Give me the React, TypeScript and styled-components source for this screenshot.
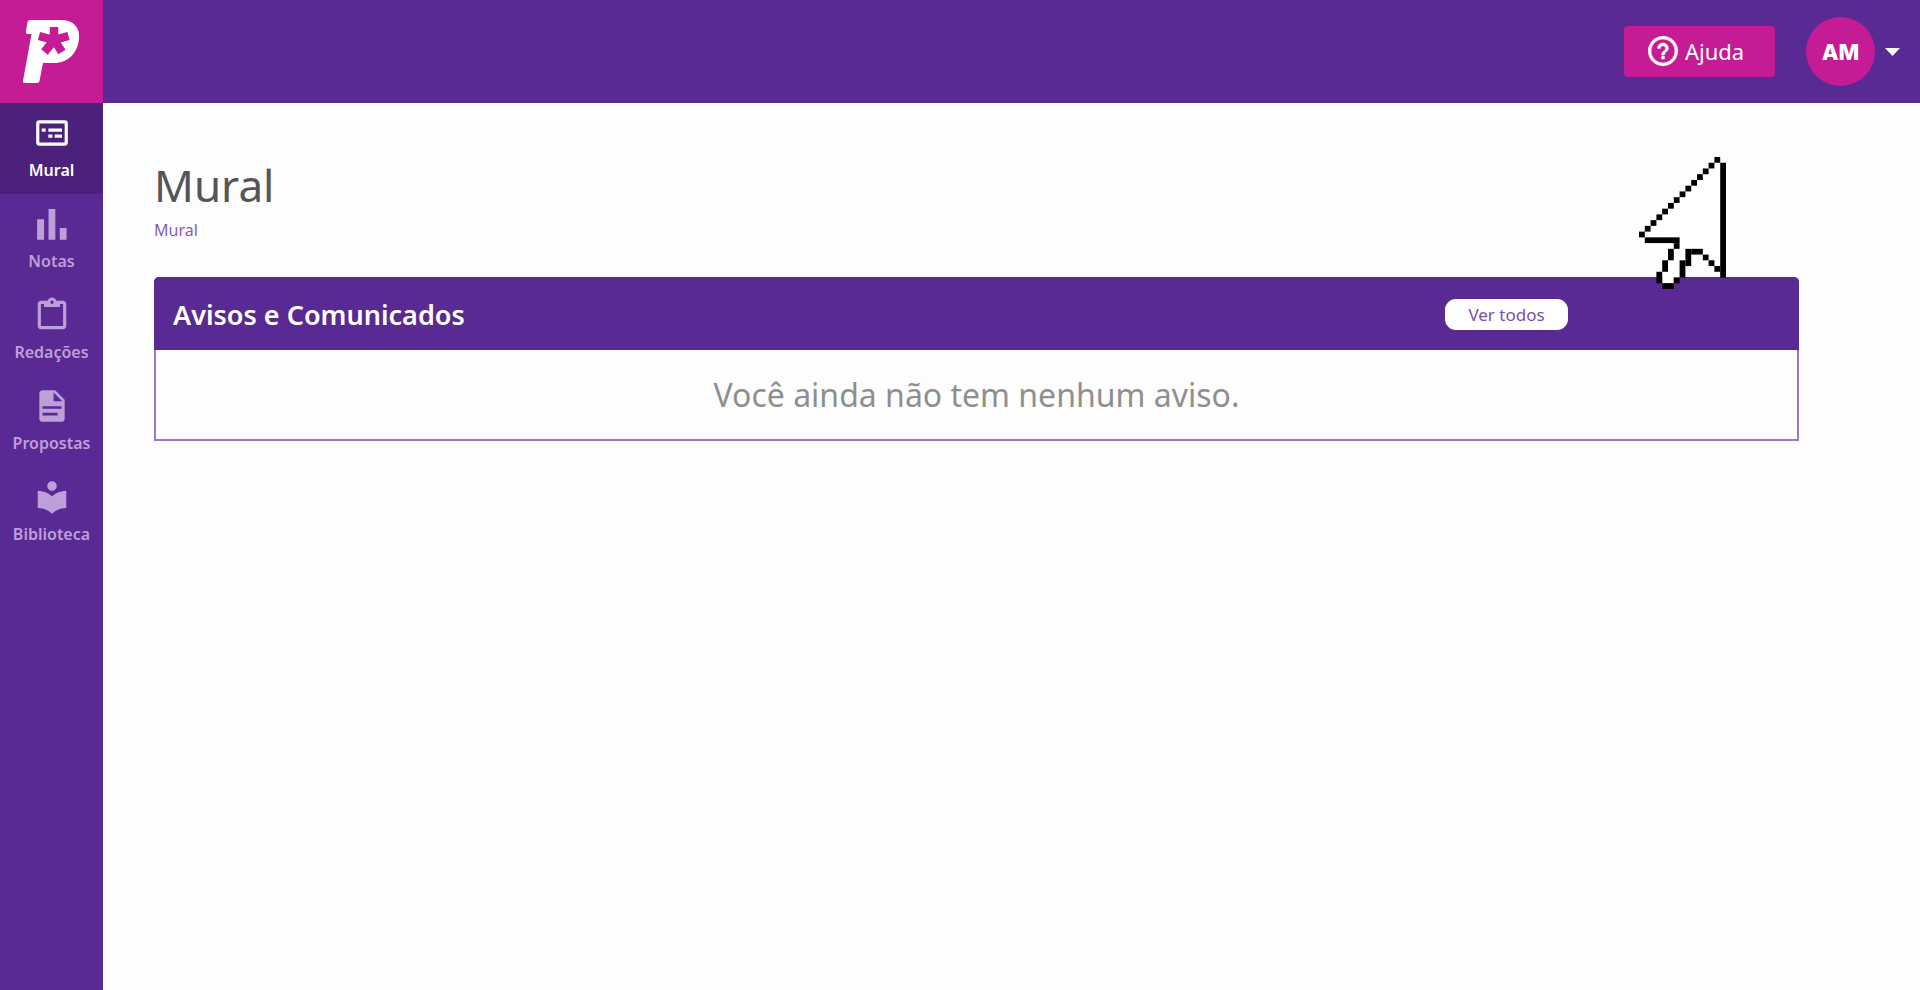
import React from "react";
import styled, { createGlobalStyle } from "styled-components";

const color = {
  purple: "#592994",
  purpleDark: "#4b217b",
  pink: "#c51b94",
  muted: "#bd9fd9",
  line: "#9a78c4",
  page: "#fdfdfd",
};

const GlobalStyle = createGlobalStyle`
  *, *::before, *::after { box-sizing: border-box; }
  body {
    margin: 0;
    background: ${color.page};
    font-family: "Noto Sans", "Open Sans", sans-serif;
  }
  button { font-family: inherit; cursor: pointer; }
`;

const Shell = styled.div`
  display: grid;
  grid-template-columns: 103px minmax(0, 1fr);
  grid-template-rows: 103px 1fr;
  min-height: 100vh;
`;

const LogoLink = styled.a`
  display: flex;
  align-items: center;
  justify-content: center;
  padding: 0 2px 2px 0;
  background: ${color.pink};
`;

const TopBar = styled.header`
  display: flex;
  align-items: center;
  justify-content: flex-end;
  gap: 31px;
  padding-right: 20px;
  background: ${color.purple};
`;

const HelpButton = styled.button`
  display: flex;
  align-items: center;
  gap: 6px;
  height: 51px;
  width: 151px;
  padding: 0 0 1px 23px;
  border: 0;
  border-radius: 4px;
  background: ${color.pink};
  color: #fff;
  font-size: 22px;
  line-height: 30px;
`;

const AccountButton = styled.button`
  display: flex;
  align-items: center;
  gap: 10px;
  padding: 0;
  border: 0;
  background: none;
  color: #fff;
`;

const Avatar = styled.span`
  display: flex;
  align-items: center;
  justify-content: center;
  width: 69px;
  height: 69px;
  border-radius: 50%;
  background: ${color.pink};
  font-family: Inter, sans-serif;
  font-size: 22px;
  font-weight: 800;
`;

const SideBar = styled.nav`
  background: ${color.purple};
`;

const NavList = styled.ul`
  margin: 0;
  padding: 0;
  list-style: none;
`;

const NavLink = styled.a<{ $active?: boolean }>`
  display: flex;
  flex-direction: column;
  align-items: center;
  gap: 7px;
  padding: 11px 0 12px;
  background: ${(p) => (p.$active ? color.purpleDark : "transparent")};
  color: ${(p) => (p.$active ? "#fff" : color.muted)};
  font-size: 16px;
  font-weight: 600;
  line-height: 23px;
  text-decoration: none;
`;

const Main = styled.main`
  padding: 58px 121px 40px 51px;
`;

const Title = styled.h1`
  margin: 0;
  color: #555;
  font-size: 44px;
  font-weight: 400;
  line-height: 48px;
`;

const Crumb = styled.a`
  display: block;
  width: max-content;
  margin: 9px 0 34px;
  color: #8560b5;
  font-size: 16px;
  line-height: 25px;
  text-decoration: none;
`;

const Card = styled.section`
  border: 2px solid ${color.line};
  border-top: 0;
  border-radius: 5px 5px 1px 1px;
`;

const CardHeader = styled.header`
  display: flex;
  align-items: center;
  justify-content: space-between;
  height: 73px;
  margin: 0 -2px;
  padding: 2px 231px 0 19px;
  border-radius: 5px 5px 0 0;
  background: ${color.purple};
`;

const CardTitle = styled.h2`
  margin: 0;
  color: #fff;
  font-size: 27px;
  font-weight: 600;
  line-height: 36px;
`;

const PillButton = styled.button`
  width: 123px;
  height: 31px;
  padding: 0;
  border: 0;
  border-radius: 11px;
  background: #fff;
  color: #7a50ac;
  font-size: 17px;
  line-height: 24px;
`;

const EmptyText = styled.p`
  margin: 0;
  padding: 22px 0 21px;
  color: #8f8f8f;
  font-size: 32px;
  line-height: 46px;
  text-align: center;
`;

const Pointer = styled.svg`
  position: absolute;
  top: 157px;
  right: 194px;
  pointer-events: none;
`;

const Icon = ({ children }: { children: React.ReactNode }) => (
  <svg width="38" height="38" viewBox="0 0 24 24" fill="currentColor" aria-hidden="true">
    {children}
  </svg>
);

const items = [
  {
    label: "Mural",
    icon: (
      <path
        fillRule="evenodd"
        d="M4 4h16a2 2 0 0 1 2 2v12a2 2 0 0 1-2 2H4a2 2 0 0 1-2-2V6a2 2 0 0 1 2-2zm0 2v12h16V6zM5.500 9.200h2.500v2H5.500zm4.200 0h8.600v2H9.700zM9.700 13h2.600v2H9.700zm4 0h4.600v2h-4.600z"
      />
    ),
  },
  {
    label: "Notas",
    icon: <path d="M2.600 9h4.400v13H2.600zM9.800 2.500h4.300V22H9.800zM16.900 14.500h4.300V22h-4.300z" />,
  },
  {
    label: "Redações",
    icon: (
      <path d="M19 3h-4.180C14.400 1.840 13.300 1 12 1s-2.400.840-2.820 2H5c-1.100 0-2 .900-2 2v14c0 1.100.900 2 2 2h14c1.100 0 2-.900 2-2V5c0-1.100-.900-2-2-2zm-7-.200a1.100 1.100 0 1 1 0 2.200 1.100 1.100 0 0 1 0-2.200zM19 19H5V5h2v2h10V5h2z" />
    ),
  },
  {
    label: "Propostas",
    icon: (
      <path d="M14 2H6c-1.100 0-1.990.900-1.990 2L4 20c0 1.100.890 2 1.990 2H18c1.100 0 2-.900 2-2V8l-6-6zm1.500 16H6v-1.700h9.500zm2.500-4.200H6v-1.700h12zM13 9V3.500L18.500 9z" />
    ),
  },
  {
    label: "Biblioteca",
    icon: (
      <path d="M12 11.550C9.640 9.350 6.480 8 3 8v11c3.480 0 6.640 1.350 9 3.550 2.360-2.190 5.520-3.550 9-3.550V8c-3.480 0-6.640 1.350-9 3.550zM12 8c1.660 0 3-1.340 3-3s-1.340-3-3-3-3 1.340-3 3 1.340 3 3 3z" />
    ),
  },
];

const Logo = () => (
  <svg width="58" height="66" viewBox="22 18 58 66" aria-hidden="true">
    <path
      fill="#fff"
      d="M30 20H61C73 20 80 27 79 38C78 53 68 63 54 63H43L39.500 81Q39 83 37 83H24.500Q22.500 83 23 81L31.500 34H28Q25.500 34 26 31L27.500 22Q28 20 30 20Z"
    />
    <g stroke={color.pink} strokeWidth="8.500">
      <path d="M54 40V27M54 40L68.500 36M54 40L62 52M54 40L44.500 52M54 40L39 36" />
    </g>
  </svg>
);

/* Outline of the pointer as [column, row, width, height] cells. */
const outline = [
  ...Array.from({ length: 14 }, (_, i) => [13 - i, i, 1, 1]),
  [14, 1, 1, 20],
  [1, 14, 6, 1],
  [6, 15, 1, 1],
  [5, 16, 1, 2],
  [4, 18, 1, 2],
  [3, 20, 1, 2],
  [4, 22, 2, 1],
  [6, 21, 1, 1],
  [7, 18, 1, 3],
  [8, 16, 1, 3],
  [9, 16, 2, 1],
  [11, 17, 1, 1],
  [12, 18, 1, 1],
  [13, 19, 1, 1],
];

export default function App() {
  return (
    <>
      <GlobalStyle />
      <Shell>
        <LogoLink href="#" aria-label="Início">
          <Logo />
        </LogoLink>
        <TopBar>
          <HelpButton type="button">
            <svg width="32" height="32" viewBox="0 0 24 24" fill="#fff" stroke="#fff" strokeWidth="0.5" aria-hidden="true">
              <path d="M11 18h2v-2h-2v2zm1-17C5.930 1 1 5.930 1 12s4.930 11 11 11 11-4.930 11-11S18.070 1 12 1zm0 20c-4.960 0-9-4.040-9-9s4.040-9 9-9 9 4.040 9 9-4.040 9-9 9zm0-15c-2.210 0-4 1.790-4 4h2c0-1.100.900-2 2-2s2 .900 2 2c0 2-3 1.750-3 5h2c0-2.250 3-2.500 3-5 0-2.210-1.790-4-4-4z" />
            </svg>
            Ajuda
          </HelpButton>
          <AccountButton type="button">
            <Avatar>AM</Avatar>
            <svg width="15" height="8" viewBox="0 0 15 8" fill="#fff" aria-hidden="true">
              <path d="M0 0h15L7.500 8z" />
            </svg>
          </AccountButton>
        </TopBar>
        <SideBar>
          <NavList>
            {items.map((item, i) => (
              <li key={item.label}>
                <NavLink href="#" $active={i === 0}>
                  <Icon>{item.icon}</Icon>
                  {item.label}
                </NavLink>
              </li>
            ))}
          </NavList>
        </SideBar>
        <Main>
          <Title>Mural</Title>
          <Crumb href="#">Mural</Crumb>
          <Card>
            <CardHeader>
              <CardTitle>Avisos e Comunicados</CardTitle>
              <PillButton type="button">Ver todos</PillButton>
            </CardHeader>
            <EmptyText>Você ainda não tem nenhum aviso.</EmptyText>
          </Card>
        </Main>
      </Shell>
      <Pointer width="87" height="132" viewBox="0 0 15 23" preserveAspectRatio="none" aria-hidden="true">
        <path
          fill="#fff"
          d="M14 1V20H13V19H12V18H11V17H8V19H7V21H6V22H4V20H5V18H6V16H7V14H1V13L13 1Z"
        />
        {outline.map(([x, y, w, h]) => (
          <rect key={`${x}-${y}`} x={x} y={y} width={w} height={h} />
        ))}
      </Pointer>
    </>
  );
}
